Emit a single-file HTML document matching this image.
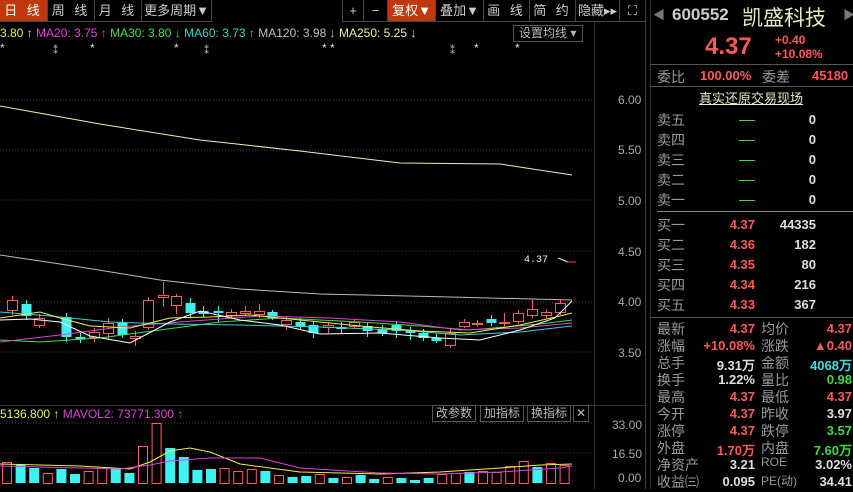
<!DOCTYPE html>
<html><head><meta charset="utf-8">
<style>
*{margin:0;padding:0;box-sizing:border-box}
body{width:853px;height:489px;background:#000;overflow:hidden;position:relative;font-family:"Liberation Sans","Noto Sans CJK SC",sans-serif;color:#c8c8c8}
.a{position:absolute;white-space:nowrap}
.tb{position:absolute;top:0;height:22px;border-right:1px solid #444;border-bottom:1px solid #444;font-size:13px;color:#ccc;text-align:center;line-height:22px;letter-spacing:3px;background:#000}
.r{color:#ff5858}.g{color:#3fd83f}.c{color:#3fe0e0}.w{color:#dedede}
.lbl{color:#9a9a9a;font-size:14px}
.num{font-family:"Liberation Sans",sans-serif;font-weight:bold;font-size:13px;text-align:right}
.btn{position:absolute;top:405px;height:17px;border:1px solid #555;font-size:12px;color:#bbb;line-height:15px;padding:0 3px;background:#000}
</style></head><body>
<div class="tb" style="left:0;width:48px;background:#c0390e;color:#fff">日 线</div>
<div class="tb" style="left:48px;width:47px">周 线</div>
<div class="tb" style="left:95px;width:47px">月 线</div>
<div class="tb" style="left:142px;width:70px;letter-spacing:0">更多周期▼</div>
<div class="tb" style="left:342px;width:22px;border-left:1px solid #444;letter-spacing:0">+</div>
<div class="tb" style="left:364px;width:24px;letter-spacing:0">−</div>
<div class="tb" style="left:388px;width:48px;background:#c0390e;color:#fff;letter-spacing:0">复权▼</div>
<div class="tb" style="left:436px;width:48px;letter-spacing:0">叠加▼</div>
<div class="tb" style="left:484px;width:46px">画 线</div>
<div class="tb" style="left:530px;width:46px">简 约</div>
<div class="tb" style="left:576px;width:44px;letter-spacing:0">隐藏▸▸</div>
<div class="tb" style="left:620px;width:26px;letter-spacing:0">⛶</div>
<div class="a" style="left:0;top:26px;font-size:12px">
<span style="color:#f0f040">3.80 ↑</span> <span style="color:#e040e0">MA20: 3.75 ↑</span> <span style="color:#40e040">MA30: 3.80 ↓</span> <span style="color:#40d0d0">MA60: 3.73 ↑</span> <span style="color:#c0c0c0">MA120: 3.98 ↓</span> <span style="color:#f0f0a0">MA250: 5.25 ↓</span></div>
<div class="a" style="left:513px;top:25px;width:70px;height:17px;border:1px solid #555;font-size:12px;color:#bbb;line-height:15px;padding-left:5px">设置均线 ▾</div>
<div class="a" style="left:0;top:41px;font-size:12px;color:#ddd">*</div>
<div class="a" style="left:50px;top:41px;font-size:11px;color:#ddd">⁑</div>
<div class="a" style="left:90px;top:41px;font-size:12px;color:#ddd">*</div>
<div class="a" style="left:174px;top:41px;font-size:12px;color:#ddd">*</div>
<div class="a" style="left:201px;top:41px;font-size:11px;color:#ddd">⁑</div>
<div class="a" style="left:322px;top:41px;font-size:12px;color:#ddd">* *</div>
<div class="a" style="left:447px;top:41px;font-size:11px;color:#ddd">⁑</div>
<div class="a" style="left:474px;top:41px;font-size:12px;color:#ddd">*</div>
<div class="a" style="left:515px;top:41px;font-size:12px;color:#ddd">*</div>

<svg class="a" style="left:0;top:0" width="650" height="489" id="ch">
<line x1="594.5" y1="22" x2="594.5" y2="489" stroke="#333"/>
<line x1="645.5" y1="0" x2="645.5" y2="489" stroke="#444"/>
<line x1="0" y1="405.5" x2="645" y2="405.5" stroke="#333"/>
<g stroke="#444" stroke-dasharray="1,2">
<line x1="0" y1="100" x2="594" y2="100"/><line x1="0" y1="150" x2="594" y2="150"/><line x1="0" y1="200" x2="594" y2="200"/><line x1="0" y1="251" x2="594" y2="251"/><line x1="0" y1="302" x2="594" y2="302"/><line x1="0" y1="352" x2="594" y2="352"/>
<line x1="0" y1="453" x2="594" y2="453"/><line x1="0" y1="423" x2="594" y2="423"/>
</g>
<g font-size="12" fill="#aaa" font-family="Liberation Sans">
<text x="618" y="104">6.00</text><text x="618" y="154">5.50</text><text x="618" y="205">5.00</text><text x="618" y="256">4.50</text><text x="618" y="306">4.00</text><text x="618" y="357">3.50</text>
<text x="612" y="429">33.00</text><text x="612" y="458">16.50</text><text x="618" y="482">0.00</text>
</g>
<polyline fill="none" stroke="#f0f0b0" points="0,106 100,124 200,140 300,151 400,163 500,164 572,175"/>
<polyline fill="none" stroke="#bbb" points="0,255 80,267 160,280 240,289 320,294 450,297 572,300"/>
<text x="524" y="262" font-size="10" fill="#eee" font-family="Liberation Mono">4.37</text>
<line x1="558" y1="258" x2="568" y2="262" stroke="#eee"/><line x1="566" y1="262" x2="576" y2="262" stroke="#f44"/>
<g id="cd"></g>
<polyline fill="none" stroke="#40e040" points="0,340 40,342 100,338 160,330 220,322 280,318 360,322 420,326 470,330 540,324 572,320"/>
<polyline fill="none" stroke="#e040e0" points="0,342 60,335 120,327 180,322 260,316 330,318 400,322 460,330 520,328 572,323"/>
<polyline fill="none" stroke="#40d0d0" points="0,312 50,316 110,322 170,324 240,325 320,327 400,330 460,335 520,332 572,326"/>
<polyline fill="none" stroke="#f0f040" points="0,318 40,312 60,318 90,326 130,328 170,318 210,317 250,315 300,320 360,326 420,331 470,333 520,325 560,316 572,313"/>
<polyline fill="none" stroke="#fff" points="0,320 30,319 60,322 90,336 130,343 170,322 200,311 240,320 280,325 320,334 380,333 440,338 480,340 520,330 555,318 572,301"/>
<g id="vol"></g>
<polyline fill="none" stroke="#f0f040" points="0,464 80,466 130,469 150,462 170,451 190,448 210,452 240,464 300,472 380,474 440,472 500,468 540,465 572,464"/>
<polyline fill="none" stroke="#e040e0" points="0,466 120,469 150,465 170,461 210,458 260,458 300,468 380,473 440,474 500,472 560,468 572,466"/>
</svg>
<div class="a" style="left:0;top:407px;font-size:12px"><span style="color:#f0f040">5136.800 ↑</span> <span style="color:#e040e0">MAVOL2: 73771.300 ↑</span></div>
<div class="btn" style="left:432px">改参数</div>
<div class="btn" style="left:480px">加指标</div>
<div class="btn" style="left:527px">换指标</div>
<div class="btn" style="left:573px;padding:0 2px">✕</div>

<div class="a" style="left:650px;top:0;width:203px;height:489px;border-left:1px solid #333"></div>
<div class="a" style="left:653px;top:6px;font-size:12px;color:#777">◀</div>
<div class="a" style="left:672px;top:5px;font-size:17px;font-weight:bold;color:#ccc">600552</div>
<div class="a" style="left:742px;top:2px;font-size:21px;color:#e8e8c0">凯盛科技</div>
<div class="a" style="left:843px;top:6px;font-size:12px;color:#777">▶</div>
<div class="a r" style="left:705px;top:33px;font-size:24px;font-weight:bold">4.37</div>
<div class="a r" style="left:775px;top:33px;font-size:12px;font-weight:bold;line-height:14px">+0.40<br>+10.08%</div>
<div class="a" style="left:650px;top:64px;width:203px;height:1px;background:#555"></div>
<div class="a lbl" style="left:657px;top:67px">委比</div>
<div class="a r num" style="left:700px;top:68px">100.00%</div>
<div class="a lbl" style="left:762px;top:67px">委差</div>
<div class="a r num" style="left:812px;top:68px">45180</div>
<div class="a" style="left:650px;top:86px;width:203px;height:1px;background:#555"></div>
<div class="a" style="left:699px;top:88px;font-size:13px;color:#e8e8c0;text-decoration:underline">真实还原交易现场</div>
<div class="a" id="ob" style="left:0;top:0"></div>
<div class="a" style="left:657px;top:211px;width:196px;height:1px;background:#888"></div>
<div class="a" style="left:650px;top:317px;width:203px;height:1px;background:#555"></div>
<script>
var ob='';
var sells=['卖五','卖四','卖三','卖二','卖一'];
sells.forEach(function(s,i){var y=110+i*20;ob+='<div class="a lbl" style="left:657px;top:'+y+'px">'+s+'</div><div class="a" style="left:739px;top:'+(y+10)+'px;width:16px;height:1px;background:#3fd83f"></div><div class="a w num" style="left:780px;width:36px;top:'+(y+2)+'px">0</div>';});
var buys=[['买一','4.37','44335'],['买二','4.36','182'],['买三','4.35','80'],['买四','4.34','216'],['买五','4.33','367']];
buys.forEach(function(b,i){var y=215+i*20;ob+='<div class="a lbl" style="left:657px;top:'+y+'px">'+b[0]+'</div><div class="a r num" style="left:715px;width:40px;top:'+(y+2)+'px">'+b[1]+'</div><div class="a w num" style="left:770px;width:46px;top:'+(y+2)+'px">'+b[2]+'</div>';});
var info=[['最新','4.37','r','均价','4.37','r'],['涨幅','+10.08%','r','涨跌','▲0.40','r'],['总手','9.31万','w','金额','4068万','c'],['换手','1.22%','w','量比','0.98','g'],['最高','4.37','r','最低','4.37','r'],['今开','4.37','r','昨收','3.97','w'],['涨停','4.37','r','跌停','3.57','g'],['外盘','1.70万','r','内盘','7.60万','g'],['净资产','3.21','w','ROE','3.02%','w'],['收益㈢','0.095','w','PE(动)','34.41','w']];
info.forEach(function(r,i){var y=319+i*17;ob+='<div class="a lbl" style="left:657px;top:'+y+'px">'+r[0]+'</div><div class="a num '+r[2]+'" style="left:690px;width:65px;top:'+(y+2)+'px">'+r[1]+'</div><div class="a lbl" style="left:761px;top:'+y+'px;font-size:'+(r[3].length>2?12:14)+'px">'+r[3]+'</div><div class="a num '+r[5]+'" style="left:790px;width:62px;top:'+(y+2)+'px">'+r[4]+'</div>';});
document.getElementById('ob').innerHTML=ob;
var C=[[12,300,310,296,315,1],[26,304,316,300,320,0],[39,318,325,314,328,1],[66,317,337,313,342,0],[80,337,339,333,343,0],[94,332,337,328,342,1],[108,323,333,318,340,1],[122,322,335,319,338,0],[135,336,338,331,346,1],[148,300,327,297,330,1],[163,295,297,282,307,1],[176,296,305,294,314,1],[190,303,313,298,318,0],[203,311,314,306,317,0],[218,311,313,306,322,0],[231,312,315,309,318,1],[245,311,313,306,316,1],[259,311,314,304,318,1],[272,312,318,310,320,0],[286,320,324,316,330,1],[300,322,327,318,330,0],[313,325,333,322,338,0],[328,325,327,322,333,1],[341,327,329,322,334,0],[354,322,326,320,329,1],[367,326,331,322,337,0],[382,329,333,325,336,0],[396,325,331,321,338,0],[410,331,333,327,340,0],[423,333,338,329,341,0],[436,338,341,334,343,0],[450,333,345,329,348,1],[464,322,326,319,328,1],[477,323,324,320,327,1],[491,319,323,315,326,0],[504,322,323,313,326,1],[518,313,321,310,324,1],[532,309,315,299,318,1],[546,312,315,309,318,1],[560,303,312,300,315,1]];
var s='';C.forEach(function(c){var col=c[5]?'#ff5c5c':'#3ff2f2';s+='<line x1="'+(c[0]+.5)+'" y1="'+c[3]+'" x2="'+(c[0]+.5)+'" y2="'+c[4]+'" stroke="'+col+'"/>';if(c[5])s+='<rect x="'+(c[0]-4.5)+'" y="'+(c[1]+.5)+'" width="10" height="'+Math.max(1,c[2]-c[1])+'" fill="#000" stroke="'+col+'"/>';else s+='<rect x="'+(c[0]-4.5)+'" y="'+c[1]+'" width="10" height="'+Math.max(1,c[2]-c[1])+'" fill="'+col+'"/>';});
document.getElementById('cd').innerHTML=s;
var V=[[462,1],[465,0],[468,0],[473,1],[469,0],[474,0],[471,1],[468,1],[468,0],[473,0],[446,1],[423,1],[448,0],[457,0],[470,0],[469,0],[468,1],[471,1],[469,1],[471,0],[475,1],[477,0],[476,0],[474,1],[478,0],[477,1],[475,0],[479,0],[477,1],[478,0],[480,0],[478,0],[474,1],[473,1],[472,0],[471,1],[472,1],[466,1],[461,1],[467,0],[463,1],[465,1]];
var v='';V.forEach(function(b,i){var x=2+i*13.6,col=b[1]?'#ff5c5c':'#3ff2f2';var h=483-b[0];if(b[1])v+='<rect x="'+(x+.5)+'" y="'+(b[0]+.5)+'" width="9" height="'+h+'" fill="#000" stroke="'+col+'"/>';else v+='<rect x="'+x+'" y="'+b[0]+'" width="10" height="'+h+'" fill="'+col+'"/>';});
document.getElementById('vol').innerHTML=v;
</script>
</body></html>
